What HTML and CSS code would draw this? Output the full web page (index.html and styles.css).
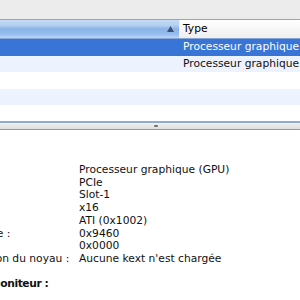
FILE: index.html
```html
<!DOCTYPE html>
<html lang="fr">
<head>
  <meta charset="UTF-8" />
  <title>Informations système</title>
  <link rel="stylesheet" href="styles.css">
</head>
<body>
  <div class="top-strip"></div>

  <div class="list">
    <div class="list-header">
      <div class="col-name sorted">
        <svg class="sort-arrow" width="7" height="6" viewBox="0 0 7 6"><polygon points="3.5,0 7,6 0,6" /></svg>
      </div>
      <div class="col-type">Type</div>
    </div>
    <div class="list-body">
      <div class="row selected">
        <div class="col-name"></div>
        <div class="col-type">Processeur graphique (GPU)</div>
      </div>
      <div class="row">
        <div class="col-name"></div>
        <div class="col-type">Processeur graphique (GPU)</div>
      </div>
      <div class="row"></div>
      <div class="row"></div>
      <div class="row"></div>
      <div class="row"></div>
    </div>
  </div>

  <div class="splitter"><span class="grip"></span></div>

  <div class="details">
    <div class="props">
      <span class="label">Type :</span><span class="value">Processeur graphique (GPU)</span>
      <span class="label">Bus :</span><span class="value">PCIe</span>
      <span class="label">Emplacement :</span><span class="value">Slot-1</span>
      <span class="label">Largeur de liaison :</span><span class="value">x16</span>
      <span class="label">Fournisseur :</span><span class="value">ATI (0x1002)</span>
      <span class="label">Identifiant du périphérique :</span><span class="value">0x9460</span>
      <span class="label">Identifiant de révision :</span><span class="value">0x0000</span>
      <span class="label">Informations sur l'extension du noyau :</span><span class="value">Aucune kext n'est chargée</span>
    </div>
    <h3 class="section">Moniteur :</h3>
  </div>
</body>
</html>
```

FILE: styles.css
```css
* {
  margin: 0;
  padding: 0;
  box-sizing: border-box;
}

html, body {
  width: 300px;
  height: 300px;
  overflow: hidden;
}

body {
  font-family: 'DejaVu Sans', sans-serif;
  font-size: 10.7px;
  color: #111;
  background: #fff;
}

.top-strip {
  height: 20px;
  background: #ececec;
  border-bottom: 1px solid #9ba4b4;
}

.list-header {
  display: grid;
  grid-template-columns: 180px 1fr;
  height: 19px;
  border-bottom: 1px solid #86a5d2;
}

.list-header .col-name {
  display: flex;
  justify-content: flex-end;
  align-items: center;
  padding-right: 5px;
  border-right: 1px solid #e8eef6;
  background: linear-gradient(#c6dbf4 0%, #b2cff1 30%, #8bb3e7 50%, #97bdee 78%, #b7d5f7 100%);
}

.sort-arrow polygon {
  fill: #3e506e;
}

.list-header .col-type {
  padding-left: 3px;
  line-height: 18px;
  color: #000;
  background: linear-gradient(#ffffff, #efefef);
}

.list-body {
  height: 84px;
  overflow: hidden;
  border-bottom: 2px solid #8eabd4;
}

.row {
  display: grid;
  grid-template-columns: 180px 1fr;
  height: 16.6px;
  line-height: 16.6px;
  white-space: nowrap;
}

.row:nth-child(even) {
  background: #edf3fe;
}

.row.selected {
  background: #3875d7;
  color: #fff;
}

.row .col-type {
  padding-left: 3px;
  overflow: hidden;
}

.splitter {
  height: 7px;
  padding-left: 154px;
  padding-top: 2px;
  background: linear-gradient(#f0f0f0, #dedede);
  border-bottom: 1px solid #9a9a9a;
}

.grip {
  display: block;
  width: 4px;
  height: 2px;
  border-radius: 1px;
  background: #6f6f6f;
}

.details {
  padding-top: 34px;
}

.props {
  display: grid;
  grid-template-columns: 219px 1fr;
  margin-left: -140px;
  line-height: 12.7px;
  white-space: nowrap;
}

.section {
  margin-top: 12px;
  margin-left: -10px;
  font-size: 10.7px;
  line-height: 12.7px;
  font-weight: bold;
  letter-spacing: -0.4px;
}
```
